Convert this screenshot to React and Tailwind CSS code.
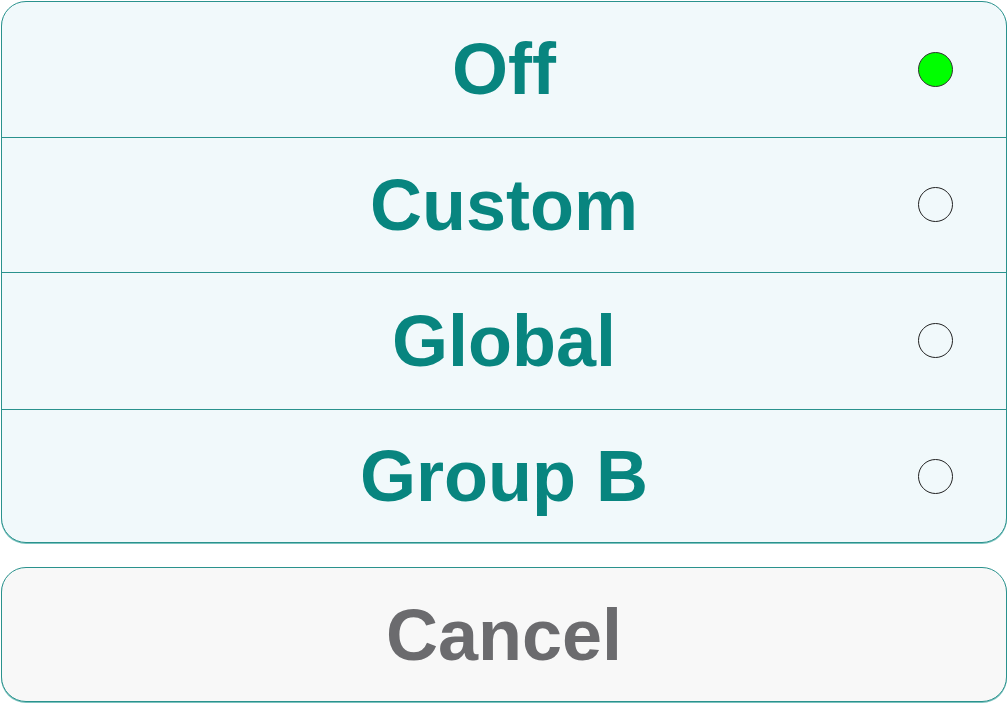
export default function App() {
  const items = [
    { label: "Off", selected: true },
    { label: "Custom", selected: false },
    { label: "Global", selected: false },
    { label: "Group B", selected: false },
  ];
  const heights = ["h-[136px]", "h-[136px]", "h-[137px]", "h-[133px]"];
  return (
    <div
      className="w-[1008px] h-[703px] bg-white p-[1px] flex flex-col gap-[24px]"
      style={{ fontFamily: '"Liberation Sans", Arial, sans-serif' }}
    >
      <div className="w-[1006px] rounded-[25px] border border-[#2a928d] bg-[#f1f9fb] overflow-hidden shadow-[0_1px_0_#7cc3bf] flex flex-col">
        {items.map((it, i) => (
          <div
            key={it.label}
            className={`${heights[i]} grid grid-cols-[1fr_auto_1fr] items-center ${
              i < items.length - 1 ? "border-b border-[#2a928d]" : ""
            }`}
          >
            <div />
            <div className="text-[72px] font-bold text-[#08857f] leading-none">
              {it.label}
            </div>
            <div className="flex justify-end pr-[53px]">
              <div
                className={`w-[35px] h-[35px] rounded-full border ${
                  it.selected
                    ? "bg-[#00ff00] border-[#333333]"
                    : "bg-transparent border-[#222222]"
                }`}
              />
            </div>
          </div>
        ))}
      </div>
      <div className="w-[1006px] h-[135px] rounded-[25px] border border-[#2a928d] bg-[#f8f8f8] shadow-[0_1px_0_#7cc3bf] flex items-center justify-center">
        <span className="text-[72px] font-bold text-[#6b6b6e] leading-none">
          Cancel
        </span>
      </div>
    </div>
  );
}
